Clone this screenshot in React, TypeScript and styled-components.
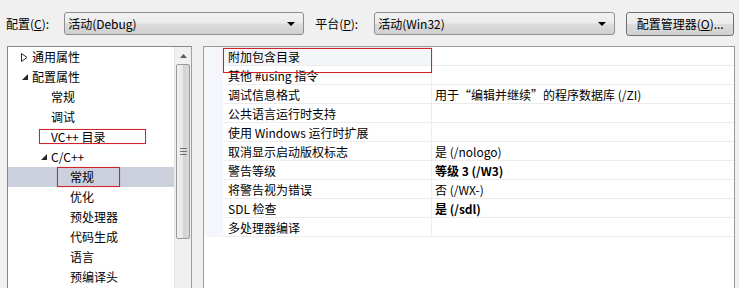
import React from "react";
import styled, { createGlobalStyle } from "styled-components";

const GlobalStyle = createGlobalStyle`
  html, body {
    margin: 0;
    padding: 0;
    background: #f0f0f0;
  }
  * {
    box-sizing: border-box;
  }
`;

const Window = styled.div`
  width: 739px;
  height: 288px;
  overflow: hidden;
  background: #f0f0f0;
  font-family: "Noto Sans CJK SC", "Liberation Sans", sans-serif;
  font-size: 12px;
  color: #000;
  position: relative;
`;

const Toolbar = styled.div`
  display: flex;
  align-items: center;
  height: 46px;
  padding: 1px 0 0 6px;
`;

const Label = styled.span<{ $gap: number }>`
  margin-right: ${(p) => p.$gap}px;
  white-space: nowrap;
  line-height: 16px;

  u {
    text-decoration: underline;
    text-underline-offset: 1px;
  }
`;

const Combo = styled.div<{ $width: number; $gap: number }>`
  display: flex;
  align-items: center;
  justify-content: space-between;
  width: ${(p) => p.$width}px;
  height: 23px;
  margin-right: ${(p) => p.$gap}px;
  padding: 0 8px 0 3px;
  border: 1px solid #8e8f8f;
  border-radius: 3px;
  background: linear-gradient(#f2f2f2 0%, #ebebeb 48%, #dddddd 52%, #cfcfcf 100%);
  line-height: 16px;
`;

const Arrow = styled.span`
  width: 0;
  height: 0;
  border-left: 4px solid transparent;
  border-right: 4px solid transparent;
  border-top: 4px solid #000;
  margin-top: 1px;
`;

const Button = styled.div`
  display: flex;
  align-items: center;
  justify-content: center;
  width: 108px;
  height: 24px;
  border: 1px solid #707070;
  border-radius: 3px;
  background: linear-gradient(#f2f2f2 0%, #ebebeb 48%, #dddddd 52%, #cfcfcf 100%);
  line-height: 16px;

  u {
    text-underline-offset: 1px;
  }
`;

const Body = styled.div`
  display: flex;
  gap: 11px;
  padding-left: 7px;
`;

const TreePanel = styled.div`
  position: relative;
  display: flex;
  width: 185px;
  height: 260px;
  border: 1px solid #828790;
  border-right-color: #a0a0a0;
  background: #fff;
`;

const TreeList = styled.div`
  flex: 1;
`;

const TreeRow = styled.div<{ $level: number; $selected?: boolean }>`
  display: flex;
  align-items: center;
  height: 20px;
  padding-left: ${(p) => 9 + p.$level * 19}px;
  background: ${(p) => (p.$selected ? "#cccfdc" : "transparent")};
  line-height: 16px;
  white-space: nowrap;
`;

const Expander = styled.span`
  display: inline-flex;
  align-items: center;
  justify-content: center;
  width: 15px;
  height: 20px;
`;

const Scrollbar = styled.div`
  display: flex;
  flex-direction: column;
  width: 17px;
  background: #f0f0f0;
  border-left: 1px solid #e6e6e6;
`;

const ScrollButton = styled.div`
  display: flex;
  align-items: center;
  justify-content: center;
  height: 17px;
`;

const Thumb = styled.div`
  display: flex;
  align-items: center;
  justify-content: center;
  height: 175px;
  margin: 0 1px;
  border: 1px solid #9a9a9a;
  border-radius: 2px;
  background: linear-gradient(90deg, #f0f0f0 0%, #e6e6e6 50%, #d4d4d4 51%, #dadada 100%);
`;

const Grip = styled.div`
  width: 7px;
  height: 7px;
  border-top: 1px solid #707070;
  border-bottom: 1px solid #707070;
  position: relative;

  &::after {
    content: "";
    position: absolute;
    left: 0;
    right: 0;
    top: 2px;
    border-top: 1px solid #707070;
  }
`;

const GridPanel = styled.div`
  position: relative;
  width: 532px;
  height: 260px;
  border: 1px solid #9b9b9b;
  background: #fff;
`;

const Grid = styled.div`
  display: grid;
  grid-template-columns: 19px 209px 1fr;
`;

const Gutter = styled.div`
  height: 19px;
  background: #f4f6fb;
`;

const NameCell = styled.div<{ $focus?: boolean }>`
  height: 19px;
  padding: 1px 0 0 5px;
  border-bottom: 1px solid #ececec;
  border-right: 1px solid #ececec;
  background: ${(p) => (p.$focus ? "#f3f5f9" : "#fff")};
  line-height: 17px;
  white-space: nowrap;
`;

const ValueCell = styled.div<{ $bold?: boolean }>`
  height: 19px;
  padding: 1px 0 0 3px;
  border-bottom: 1px solid #ececec;
  line-height: 17px;
  font-weight: ${(p) => (p.$bold ? 700 : 400)};
  white-space: nowrap;
`;

const Mark = styled.div<{ $x: number; $y: number; $w: number; $h: number }>`
  position: absolute;
  left: ${(p) => p.$x}px;
  top: ${(p) => p.$y}px;
  width: ${(p) => p.$w}px;
  height: ${(p) => p.$h}px;
  border: 1px solid #d0232b;
  box-shadow: 0 0 1px rgba(208, 35, 43, 0.4);
  pointer-events: none;
`;

const Collapsed = () => (
  <svg width="7" height="9" viewBox="0 0 7 9">
    <path d="M0.5 0.5 L6 4.5 L0.5 8.5 Z" fill="#fff" stroke="#262626" strokeWidth="1" />
  </svg>
);

const Expanded = () => (
  <svg width="6" height="6" viewBox="0 0 6 6">
    <path d="M6 0 L6 6 L0 6 Z" fill="#262626" />
  </svg>
);

type TreeItem = { label: string; level: number; state?: "open" | "closed"; selected?: boolean };

const treeItems: TreeItem[] = [
  { label: "通用属性", level: 0, state: "closed" },
  { label: "配置属性", level: 0, state: "open" },
  { label: "常规", level: 1 },
  { label: "调试", level: 1 },
  { label: "VC++ 目录", level: 1 },
  { label: "C/C++", level: 1, state: "open" },
  { label: "常规", level: 2, selected: true },
  { label: "优化", level: 2 },
  { label: "预处理器", level: 2 },
  { label: "代码生成", level: 2 },
  { label: "语言", level: 2 },
  { label: "预编译头", level: 2 },
];

const properties: { name: string; value: string; bold?: boolean }[] = [
  { name: "附加包含目录", value: "" },
  { name: "其他 #using 指令", value: "" },
  { name: "调试信息格式", value: "用于“编辑并继续”的程序数据库 (/ZI)" },
  { name: "公共语言运行时支持", value: "" },
  { name: "使用 Windows 运行时扩展", value: "" },
  { name: "取消显示启动版权标志", value: "是 (/nologo)" },
  { name: "警告等级", value: "等级 3 (/W3)", bold: true },
  { name: "将警告视为错误", value: "否 (/WX-)" },
  { name: "SDL 检查", value: "是 (/sdl)", bold: true },
  { name: "多处理器编译", value: "" },
];

export default function App() {
  return (
    <Window>
      <GlobalStyle />
      <Toolbar>
        <Label $gap={15}>
          配置(<u>C</u>):
        </Label>
        <Combo $width={240} $gap={11}>
          <span>活动(Debug)</span>
          <Arrow />
        </Combo>
        <Label $gap={16}>
          平台(<u>P</u>):
        </Label>
        <Combo $width={241} $gap={11}>
          <span>活动(Win32)</span>
          <Arrow />
        </Combo>
        <Button>
          <span>
            配置管理器(<u>O</u>)...
          </span>
        </Button>
      </Toolbar>
      <Body>
        <TreePanel>
          <TreeList>
            {treeItems.map((item, i) => (
              <TreeRow key={i} $level={item.level} $selected={item.selected}>
                <Expander>
                  {item.state === "closed" && <Collapsed />}
                  {item.state === "open" && <Expanded />}
                </Expander>
                <span>{item.label}</span>
              </TreeRow>
            ))}
          </TreeList>
          <Scrollbar>
            <ScrollButton>
              <svg width="7" height="4" viewBox="0 0 7 4">
                <path d="M0 4 L3.5 0 L7 4 Z" fill="#5a5a5a" />
              </svg>
            </ScrollButton>
            <Thumb>
              <Grip />
            </Thumb>
          </Scrollbar>
          <Mark $x={31} $y={82} $w={107} $h={15} />
          <Mark $x={49} $y={120} $w={63} $h={20} />
        </TreePanel>
        <GridPanel>
          <Grid>
            {properties.map((p, i) => (
              <React.Fragment key={i}>
                <Gutter />
                <NameCell $focus={i === 0}>{p.name}</NameCell>
                <ValueCell $bold={p.bold}>{p.value}</ValueCell>
              </React.Fragment>
            ))}
          </Grid>
          <Mark $x={19} $y={1} $w={209} $h={25} />
        </GridPanel>
      </Body>
    </Window>
  );
}
